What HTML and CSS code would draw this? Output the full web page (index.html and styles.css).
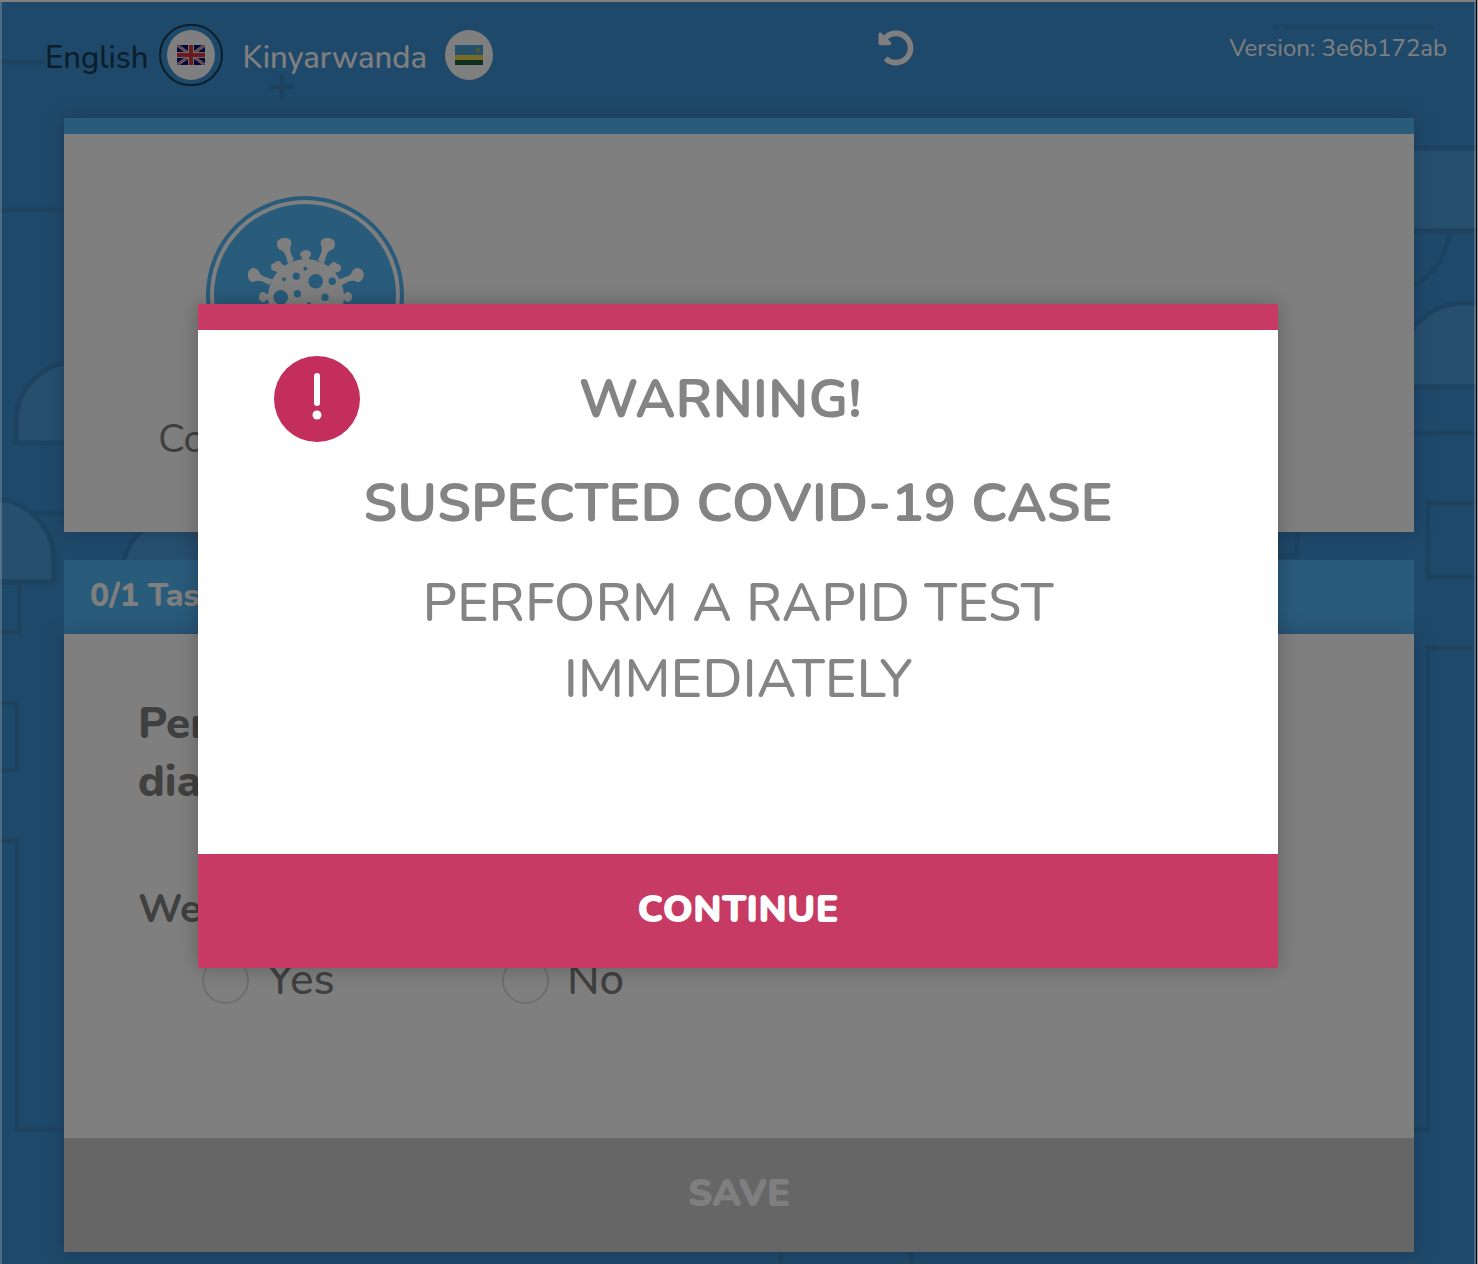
FILE: index.html
```html
<!DOCTYPE html>
<html lang="en">
<head>
<meta charset="utf-8">
<meta name="viewport" content="width=device-width, initial-scale=1">
<title>Rapid test task</title>
<link rel="stylesheet" href="styles.css">
</head>
<body>
<div class="screen">
  <svg class="scenery" viewBox="0 0 1478 1264" preserveAspectRatio="xMidYMin slice" aria-hidden="true">
    <g class="solid">
      <path d="M17 443V422A60 60 0 0 1 77 362H120V443Z"/>
      <path d="M-10 499A62 62 0 0 1 55 561V582H-10Z"/>
      <path d="M123 582A62 62 0 0 1 185 514A62 62 0 0 1 247 582Z"/>
      <path d="M1390 148H1490V231H1390Z"/>
      <path d="M1400 387V368A66 65 0 0 1 1466 303H1490V387Z"/>
    </g>
    <g class="line">
      <path d="M0 62H46M0 210H70M33 513H70M-4 582H20V632H-4M-4 703H18V770H-4M-4 841H18V1130H70"/>
      <path d="M1451 231Q1446 270 1408 290M1400 433H1480M1490 503H1429V577H1490M1490 648H1429V1130H1400M1270 556H1298V520M782 1240V1270M912 1240V1270"/>
      <path class="round" d="M272 87H293M283 76V97M1287 27H1432M1276 27H1277"/>
    </g>
  </svg>

  <header class="topbar">
    <nav class="languages" aria-label="Language">
      <button class="language is-active" type="button"><span class="name">English</span>
        <span class="ring"><span class="disc">
          <svg width="28" height="20" viewBox="0 0 28 20" aria-hidden="true">
            <path fill="#00107a" d="M0 0H28V20H0Z"/>
            <path stroke="#ddd" stroke-width="3" d="M0 0L28 20M28 0L0 20"/>
            <path stroke="#d8343e" stroke-width="1" d="M0 0L28 20M28 0L0 20"/>
            <path stroke="#ddd" stroke-width="6" d="M14 0V20M0 10H28"/>
            <path stroke="#d8343e" stroke-width="4" d="M14 0V20M0 10H28"/>
          </svg>
        </span></span>
      </button>
      <button class="language" type="button"><span class="name">Kinyarwanda</span>
        <span class="ring"><span class="disc">
          <svg width="28" height="20" viewBox="0 0 28 20" aria-hidden="true">
            <path fill="#4ba3d6" d="M0 0H28V10H0Z"/>
            <path fill="#f0d848" d="M0 10H28V15H0Z"/>
            <path fill="#20603d" d="M0 15H28V20H0Z"/>
            <circle cx="23" cy="5" r="2" fill="#b8b850"/>
          </svg>
        </span></span>
      </button>
    </nav>
    <button class="undo" type="button" aria-label="Restart">
      <svg width="36" height="36" viewBox="0 0 512 512" aria-hidden="true"><path fill="currentColor" d="M255.545 8c-66.269.119-126.438 26.233-170.86 68.685L48.971 40.971C33.851 25.851 8 36.559 8 57.941V192c0 13.255 10.745 24 24 24h134.059c21.382 0 32.09-25.851 16.971-40.971l-41.75-41.75c30.864-28.899 70.801-44.907 113.23-45.273 92.398-.798 170.283 73.977 169.484 169.442C423.236 348.009 349.816 424 256 424c-41.127 0-79.997-14.678-110.63-41.556-4.743-4.161-11.906-3.908-16.368.553L89.34 422.659c-4.872 4.872-4.631 12.815.482 17.433C133.798 479.813 192.074 504 256 504c136.966 0 247.999-111.033 248-247.998C504.001 119.193 392.354 7.755 255.545 8z"/></svg>
    </button>
    <span class="version">Version: 3e6b172ab</span>
  </header>

  <main class="content">
    <section class="card summary">
      <svg class="emblem" width="198" height="198" viewBox="206 196 198 198" aria-hidden="true">
        <circle cx="305" cy="295" r="97" fill="none" stroke="#52b6f6" stroke-width="4"/>
        <circle cx="305" cy="295" r="91" fill="#52b6f6"/>
        <g fill="#fff">
          <path d="M278 248C275 241 279 238 285 238C291 238 292 242 291 245C289 250 291 254 294 260L288 264C286 256 285 252 281 250Q279 250 278 248Z"/>
          <path d="M334 248C337 241 333 238 327 238C321 238 320 242 321 245C323 250 321 254 318 260L324 264C326 256 327 252 331 250Q333 250 334 248Z"/>
          <path d="M250 281C246 276 248 269 253 268C257 268 259 271 260 274C263 277 267 277 273 280L269 285C263 281 259 280 256 281Q252 283 250 281Z"/>
          <path d="M361 281C366 276 364 269 358 268C354 268 352 271 351 274C348 277 344 277 338 280L342 285C348 281 352 280 355 281Q359 283 361 281Z"/>
          <path d="M302 260C303 257 300 257 300 254C301 249 311 249 311 254C311 257 308 257 309 260Z"/>
          <circle cx="275" cy="267" r="4"/><circle cx="278" cy="264" r="3"/><path d="M273 270L280 262L287 268L281 274Z"/>
          <circle cx="337" cy="268" r="4"/><circle cx="334" cy="265" r="3"/><path d="M339 271L332 263L325 269L331 275Z"/>
          <ellipse cx="263" cy="297" rx="4" ry="5"/><path d="M262 294H270V300H262Z"/>
          <ellipse cx="348" cy="297" rx="4" ry="5"/><path d="M349 294H341V300H349Z"/>
          <circle cx="306" cy="297" r="38"/>
        </g>
        <g fill="#52b6f6">
          <circle cx="315.700" cy="281.300" r="7.300"/><circle cx="280.700" cy="297.300" r="7.300"/>
          <circle cx="296.300" cy="276.300" r="3.700"/><circle cx="332.300" cy="281.300" r="3.700"/>
          <circle cx="284" cy="279.300" r="2"/><circle cx="305.300" cy="268.700" r="2"/>
          <circle cx="297.300" cy="293.700" r="3.700"/><circle cx="325" cy="297.300" r="3.700"/>
          <circle cx="309" cy="304" r="2"/>
        </g>
      </svg>
      <h1>Coronavirus Test</h1>
    </section>

    <section class="tasks">
      <h2 class="taskbar">0/1 Tasks</h2>
      <form class="card task">
        <div class="questions">
          <h3>Perform a rapid<br>diagnostic test</h3>
          <fieldset>
            <legend>Were you able to do it?</legend>
            <div class="choices">
              <label><input type="radio" name="done" value="yes">Yes</label>
              <label><input type="radio" name="done" value="no">No</label>
            </div>
          </fieldset>
        </div>
        <button class="save" type="button">SAVE</button>
      </form>
    </section>
  </main>

  <div class="overlay">
    <div class="dialog" role="alertdialog" aria-modal="true" aria-labelledby="warning-title" aria-describedby="warning-text">
      <div class="dialog-body">
        <div class="dialog-head">
          <svg width="86" height="86" viewBox="0 0 86 86" aria-hidden="true">
            <circle cx="43" cy="43" r="43" fill="#c32e5c"/>
            <path d="M43 20V47" stroke="#fff" stroke-width="6" stroke-linecap="round"/>
            <circle cx="43" cy="59" r="4.500" fill="#fff"/>
          </svg>
          <h2 id="warning-title">WARNING!</h2>
        </div>
        <h3>SUSPECTED COVID-19 CASE</h3>
        <p id="warning-text">PERFORM A RAPID TEST<br>IMMEDIATELY</p>
      </div>
      <button class="continue" type="button">CONTINUE</button>
    </div>
  </div>
</div>
</body>
</html>
```
FILE: styles.css
```css
* { box-sizing: border-box; }

body {
  margin: 0;
  border-right: 1px solid #a0a0a0;
  font-family: Nunito, Lato, "Open Sans", sans-serif;
  color: #808080;
}

h1, h2, h3, p { margin: 0; }

button {
  border: 0;
  padding: 0;
  background: none;
  color: inherit;
  font: inherit;
}

.screen {
  position: relative;
  min-height: 100vh;
  border-right: 1px solid #000;
  background: #3e92d4;
  overflow: hidden;
}

.scenery {
  position: absolute;
  inset: 0;
  width: 100%;
  height: 100%;
}

.solid { fill: #4c9edc; stroke: #3a86c2; stroke-width: 5; }
.line { fill: none; stroke: #3a86c2; stroke-width: 5; }
.round { stroke-linecap: round; }

.topbar {
  position: relative;
  display: grid;
  grid-template-columns: 25fr auto 16fr;
  align-items: start;
  height: 118px;
  padding: 24px 29px 0 45px;
  color: #fff;
}

.topbar, .languages, .language { white-space: nowrap; }

.languages { display: flex; gap: 20px; }

.language {
  display: flex;
  align-items: center;
  gap: 10px;
  font-size: 31px;
  font-weight: 500;
  line-height: 40px;
}

.name { padding-top: 6px; }

.language.is-active { color: #143c56; }

.ring {
  display: grid;
  place-items: center;
  width: 64px;
  height: 62px;
  border: 2px solid transparent;
  border-radius: 32px;
}

.is-active .ring { border-color: #143c56; }

.disc {
  display: grid;
  place-items: center;
  width: 48px;
  height: 50px;
  border-radius: 50%;
  background: #fff;
}

.undo { padding-top: 6px; }
.undo svg, .disc svg, .emblem { display: block; }

.version {
  justify-self: end;
  padding-top: 8px;
  font-size: 24px;
  line-height: 32px;
}

.content {
  position: relative;
  display: flex;
  flex-direction: column;
  gap: 28px;
  padding: 0 62px 12px 64px;
}

.card {
  background: #fff;
  box-shadow: 0 0 20px rgba(40, 40, 90, 0.25);
}

.summary {
  height: 414px;
  border-top: 16px solid #52b6f6;
  padding: 62px 94px 0;
}

.emblem { margin-left: 48px; }

.summary h1 {
  padding-top: 20px;
  font-size: 40px;
  font-weight: 400;
  line-height: 50px;
}

.taskbar {
  height: 74px;
  padding: 0 26px;
  background: #52b6f6;
  color: #fff;
  font-size: 32px;
  font-weight: 800;
  line-height: 72px;
}

.task {
  display: flex;
  flex-direction: column;
}

.questions {
  height: 504px;
  padding: 61px 74px 0;
}

.questions h3 {
  font-size: 44px;
  font-weight: 800;
  line-height: 58px;
}

fieldset {
  margin: 0;
  border: 0;
  padding: 72px 0 0;
}

legend {
  float: left;
  width: 100%;
  padding: 0;
  font-size: 40px;
  font-weight: 700;
  line-height: 52px;
}

.choices {
  display: grid;
  grid-template-columns: 300px 300px;
  clear: both;
  padding: 21px 0 0 64px;
}

.choices label {
  display: flex;
  align-items: center;
  gap: 18px;
  font-size: 44px;
  font-weight: 500;
  line-height: 48px;
}

.choices input {
  appearance: none;
  width: 47px;
  height: 47px;
  margin: 0;
  border: 2px solid #dcdcdc;
  border-radius: 50%;
}

.save, .continue {
  width: 100%;
  height: 114px;
  padding-bottom: 4px;
  color: #fff;
  font-size: 38px;
  font-weight: 900;
}

.save { background: #ccc; }

.overlay {
  position: absolute;
  inset: 0;
  display: grid;
  place-items: center;
  padding-top: 8px;
  background: rgba(0, 0, 0, 0.5);
  box-shadow: inset 0 2px #808080, inset 2px 0 rgba(255, 255, 255, 0.2), inset -2px 0 rgba(255, 255, 255, 0.2);
}

.dialog {
  width: 90%;
  max-width: 1080px;
  border-top: 26px solid #c63a64;
  background: #fff;
  box-shadow: 0 0 20px rgba(0, 0, 0, 0.25);
  color: #848484;
  text-align: center;
}

.dialog-body {
  height: 524px;
  padding: 26px 76px;
  font-size: 54px;
}

.dialog-head {
  display: flex;
  align-items: center;
  padding-right: 122px;
}

.dialog-head h2 { flex: 1; }

.dialog-body h2, .dialog-body h3 {
  font-size: inherit;
  font-weight: 700;
  line-height: 76px;
}

.dialog-body h3 { padding-top: 23px; }

.dialog-body p {
  padding-top: 24px;
  font-weight: 500;
  line-height: 76px;
}

.continue { display: block; background: #c63a64; }
```
